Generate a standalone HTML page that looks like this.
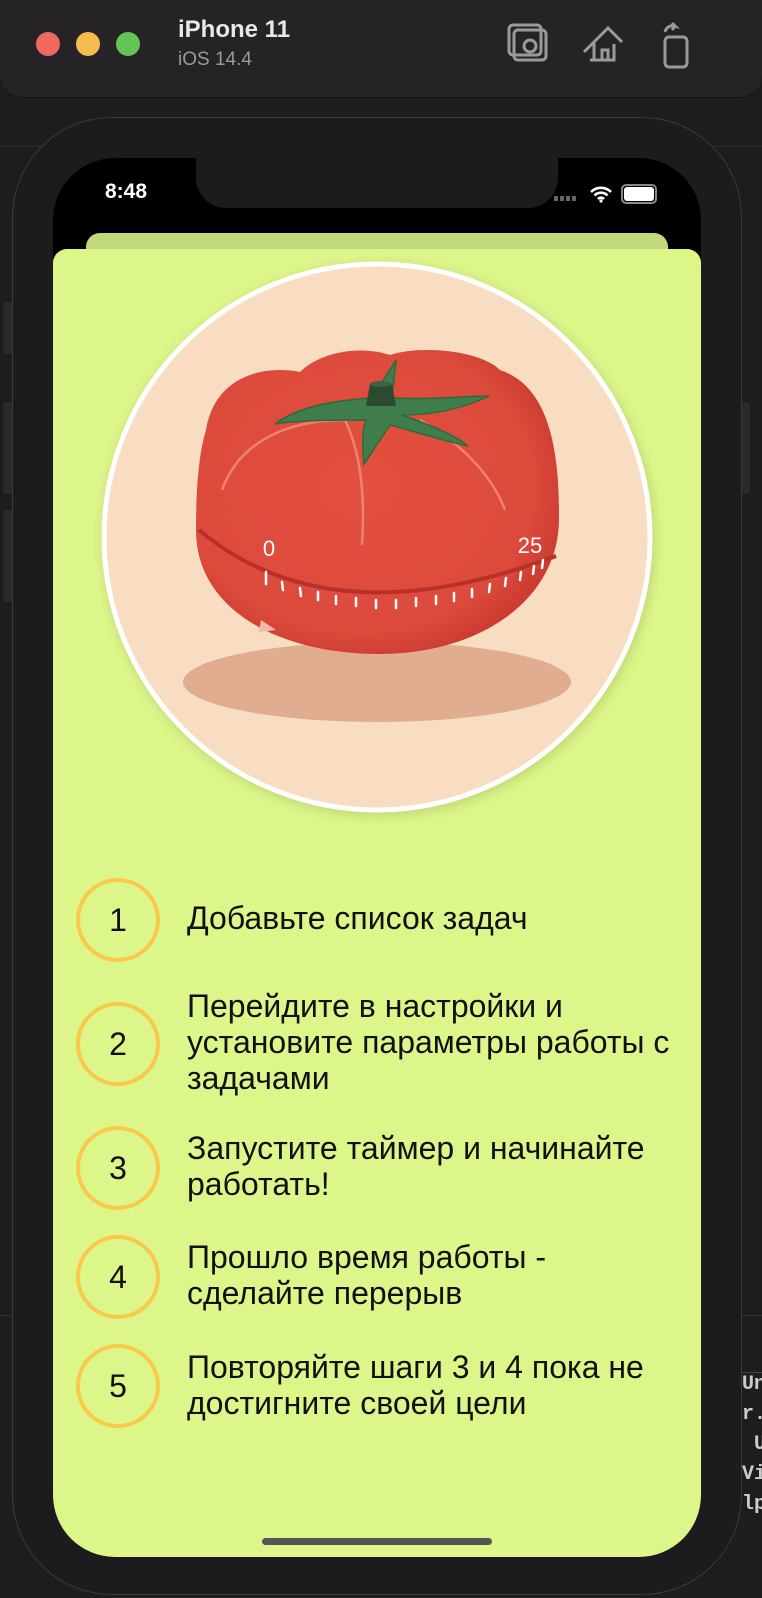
<!DOCTYPE html>
<html><head><meta charset="utf-8"><style>
html,body{margin:0;padding:0;}
body{width:762px;height:1598px;position:relative;overflow:hidden;background:#1d1c1f;font-family:"Liberation Sans",sans-serif;}
.abs{position:absolute;}
.step{position:absolute;left:76px;width:76px;height:76px;border:4px solid #f8c94a;border-radius:50%;text-align:center;line-height:76px;font-size:32px;color:#111;}
.txt{position:absolute;left:187px;font-size:32px;line-height:36px;color:#111;}
</style></head><body>
<div class="abs" style="left:0;top:146px;width:762px;height:1px;background:#2c2b2e"></div>
<div class="abs" style="left:0;top:1315px;width:762px;height:1px;background:#333"></div>
<div class="abs" style="left:742px;top:1372px;width:20px;height:1px;background:#444"></div>
<div class="abs" style="left:3px;top:302px;width:10px;height:52px;background:#2a2a2c;border-radius:3px"></div>
<div class="abs" style="left:3px;top:402px;width:10px;height:92px;background:#2a2a2c;border-radius:3px"></div>
<div class="abs" style="left:3px;top:510px;width:10px;height:92px;background:#2a2a2c;border-radius:3px"></div>
<div class="abs" style="left:740px;top:402px;width:10px;height:92px;background:#2a2a2c;border-radius:3px"></div>
<div class="abs" style="left:0;top:0;width:762px;height:97px;background:#252326;border-radius:0 0 22px 22px;border-bottom:1px solid #111;"></div>
<div class="abs" style="left:36px;top:32px;width:24px;height:24px;border-radius:50%;background:#ee6a5f"></div>
<div class="abs" style="left:76px;top:32px;width:24px;height:24px;border-radius:50%;background:#f5bd4f"></div>
<div class="abs" style="left:116px;top:32px;width:24px;height:24px;border-radius:50%;background:#61c454"></div>
<div class="abs" style="left:178px;top:16px;color:#e8e8e8;font-weight:bold;font-size:24px;">iPhone 11</div>
<div class="abs" style="left:178px;top:49px;color:#9a9a9a;font-size:19px;">iOS 14.4</div>
<svg class="abs" style="left:505px;top:22px" width="200" height="50" viewBox="0 0 200 50" fill="none" stroke="#9b999c" stroke-width="3">
<rect x="9" y="8" width="32" height="30" rx="4"/><rect x="4" y="3" width="32" height="30" rx="4"/><circle cx="25" cy="24" r="6"/>
<path d="M89 38V20l-10 10M89 20l14-14 14 14M97 38V28h6v10M85 38h24V22"/>
<path d="M160 10a8 8 0 0 1 10-6l-3-3M170 4l-3 4"/><rect x="160" y="15" width="22" height="30" rx="4"/>
</svg>
<div class="abs" style="left:12px;top:117px;width:728px;height:1476px;border-radius:100px;background:#1c1c1e;border:1px solid #3a3a3c;"></div>
<div class="abs" style="left:53px;top:158px;width:648px;height:1399px;border-radius:62px;background:#000;overflow:hidden;">
 <div class="abs" style="left:143px;top:-2px;width:362px;height:52px;background:#1c1c1e;border-radius:0 0 30px 30px;"></div>
 <div class="abs" style="left:52px;top:22px;color:#fff;font-size:21px;font-weight:bold;">8:48</div>
 <div class="abs" style="left:501px;top:38px;width:22px;height:5px;background:repeating-linear-gradient(90deg,#666 0 4px,transparent 4px 6px)"></div>
 <svg class="abs" style="left:536px;top:27px" width="24" height="18" viewBox="0 0 24 18"><path d="M2 7a14 14 0 0 1 20 0M5.5 10.5a9 9 0 0 1 13 0M9 14a4 4 0 0 1 6 0" stroke="#fff" stroke-width="2.6" fill="none"/><circle cx="12" cy="16" r="1.6" fill="#fff"/></svg>
 <div class="abs" style="left:568px;top:26px;width:32px;height:16px;border:2px solid #888;border-radius:5px;"><div style="margin:1px;height:14px;background:#fff;border-radius:3px"></div></div>
 <div class="abs" style="left:33px;top:75px;width:582px;height:40px;background:#c2d97b;border-radius:14px;"></div>
 <div class="abs" style="left:0;top:91px;width:648px;height:1400px;background:#ddf68a;border-radius:14px 14px 0 0;"></div>
 <div class="abs" style="left:209px;top:1380px;width:230px;height:7px;background:#555;border-radius:4px;"></div>
</div>
<svg class="abs" style="left:0;top:0" width="762" height="860" viewBox="0 0 762 860">
<defs><filter id="sh"><feGaussianBlur stdDeviation="5"/></filter>
<radialGradient id="bd" cx="0.45" cy="0.45" r="0.6"><stop offset="0" stop-color="#e4503f"/><stop offset="0.8" stop-color="#dc4a3c"/><stop offset="1" stop-color="#c9392f"/></radialGradient></defs>
<circle cx="379" cy="540" r="277" fill="#b9cf70" filter="url(#sh)" opacity="0.7"/>
<circle cx="377" cy="537" r="273" fill="#f8ddc3" stroke="#fff" stroke-width="5"/>
<ellipse cx="377" cy="682" rx="194" ry="40" fill="#d9a184" opacity="0.8"/>
<path d="M206 430C215 375 265 365 300 372C320 352 360 345 390 355C420 345 480 350 500 370C545 385 560 440 559 520C558 600 480 654 379 654C280 654 196 610 196 530C196 480 200 450 206 430Z" fill="url(#bd)"/>
<path d="M222 490C240 440 290 420 345 420M345 420C362 455 365 500 362 545M420 420C455 440 490 470 505 510" stroke="#f09080" stroke-width="2.5" fill="none" opacity="0.8"/>
<path d="M199 530Q330 640 556 556" stroke="#b8302a" stroke-width="4" fill="none"/>
<g stroke="#fff" stroke-width="2.5" stroke-linecap="round">
<path d="M266 572v12"/><path d="M282 582l1 8M300 588l1 8M318 592v8M336 596v8M356 598v8M376 600v8M396 600v8M416 598v8M436 596v8M454 593v8M472 589v8M490 584l-1 8M506 578l-1 8M521 572l-1 8M534 566l-1 8M543 560l-1 8"/>
</g>
<text x="269" y="556" fill="#fff" font-size="22" text-anchor="middle" font-family="Liberation Sans">0</text>
<text x="530" y="553" fill="#fff" font-size="22" text-anchor="middle" font-family="Liberation Sans">25</text>
<path d="M261 620l15 10-17 2z" fill="#f5b7a8"/>
<path d="M275 424C300 405 340 400 372 398L396 360L392 398C430 400 465 396 489 396C460 410 430 415 402 415C430 425 455 435 468 446C440 440 410 430 390 425C380 440 370 455 364 464C362 445 362 430 366 420C340 420 300 420 275 424Z" fill="#3f7d4c" stroke="#2f6a3c" stroke-width="1.5"/>
<path d="M370 384h22l4 22h-30z" fill="#2b4a30"/><ellipse cx="381" cy="384" rx="11" ry="3" fill="#3e6446"/>
</svg>
<div class="step" style="top:878px">1</div>
<div class="txt" style="top:900px">Добавьте список задач</div>
<div class="step" style="top:1002px">2</div>
<div class="txt" style="top:988px">Перейдите в настройки и<br>установите параметры работы с<br>задачами</div>
<div class="step" style="top:1126px">3</div>
<div class="txt" style="top:1130px">Запустите таймер и начинайте<br>работать!</div>
<div class="step" style="top:1235px">4</div>
<div class="txt" style="top:1239px">Прошло время работы -<br>сделайте перерыв</div>
<div class="step" style="top:1344px">5</div>
<div class="txt" style="top:1349px">Повторяйте шаги 3 и 4 пока не<br>достигните своей цели</div>
<div class="abs" style="left:742px;top:1370px;color:#ccc;font-family:'Liberation Mono',monospace;font-weight:bold;font-size:20px;line-height:30px;">Un<br>r.<br>&nbsp;U<br>Vi<br>lp</div>
</body></html>
